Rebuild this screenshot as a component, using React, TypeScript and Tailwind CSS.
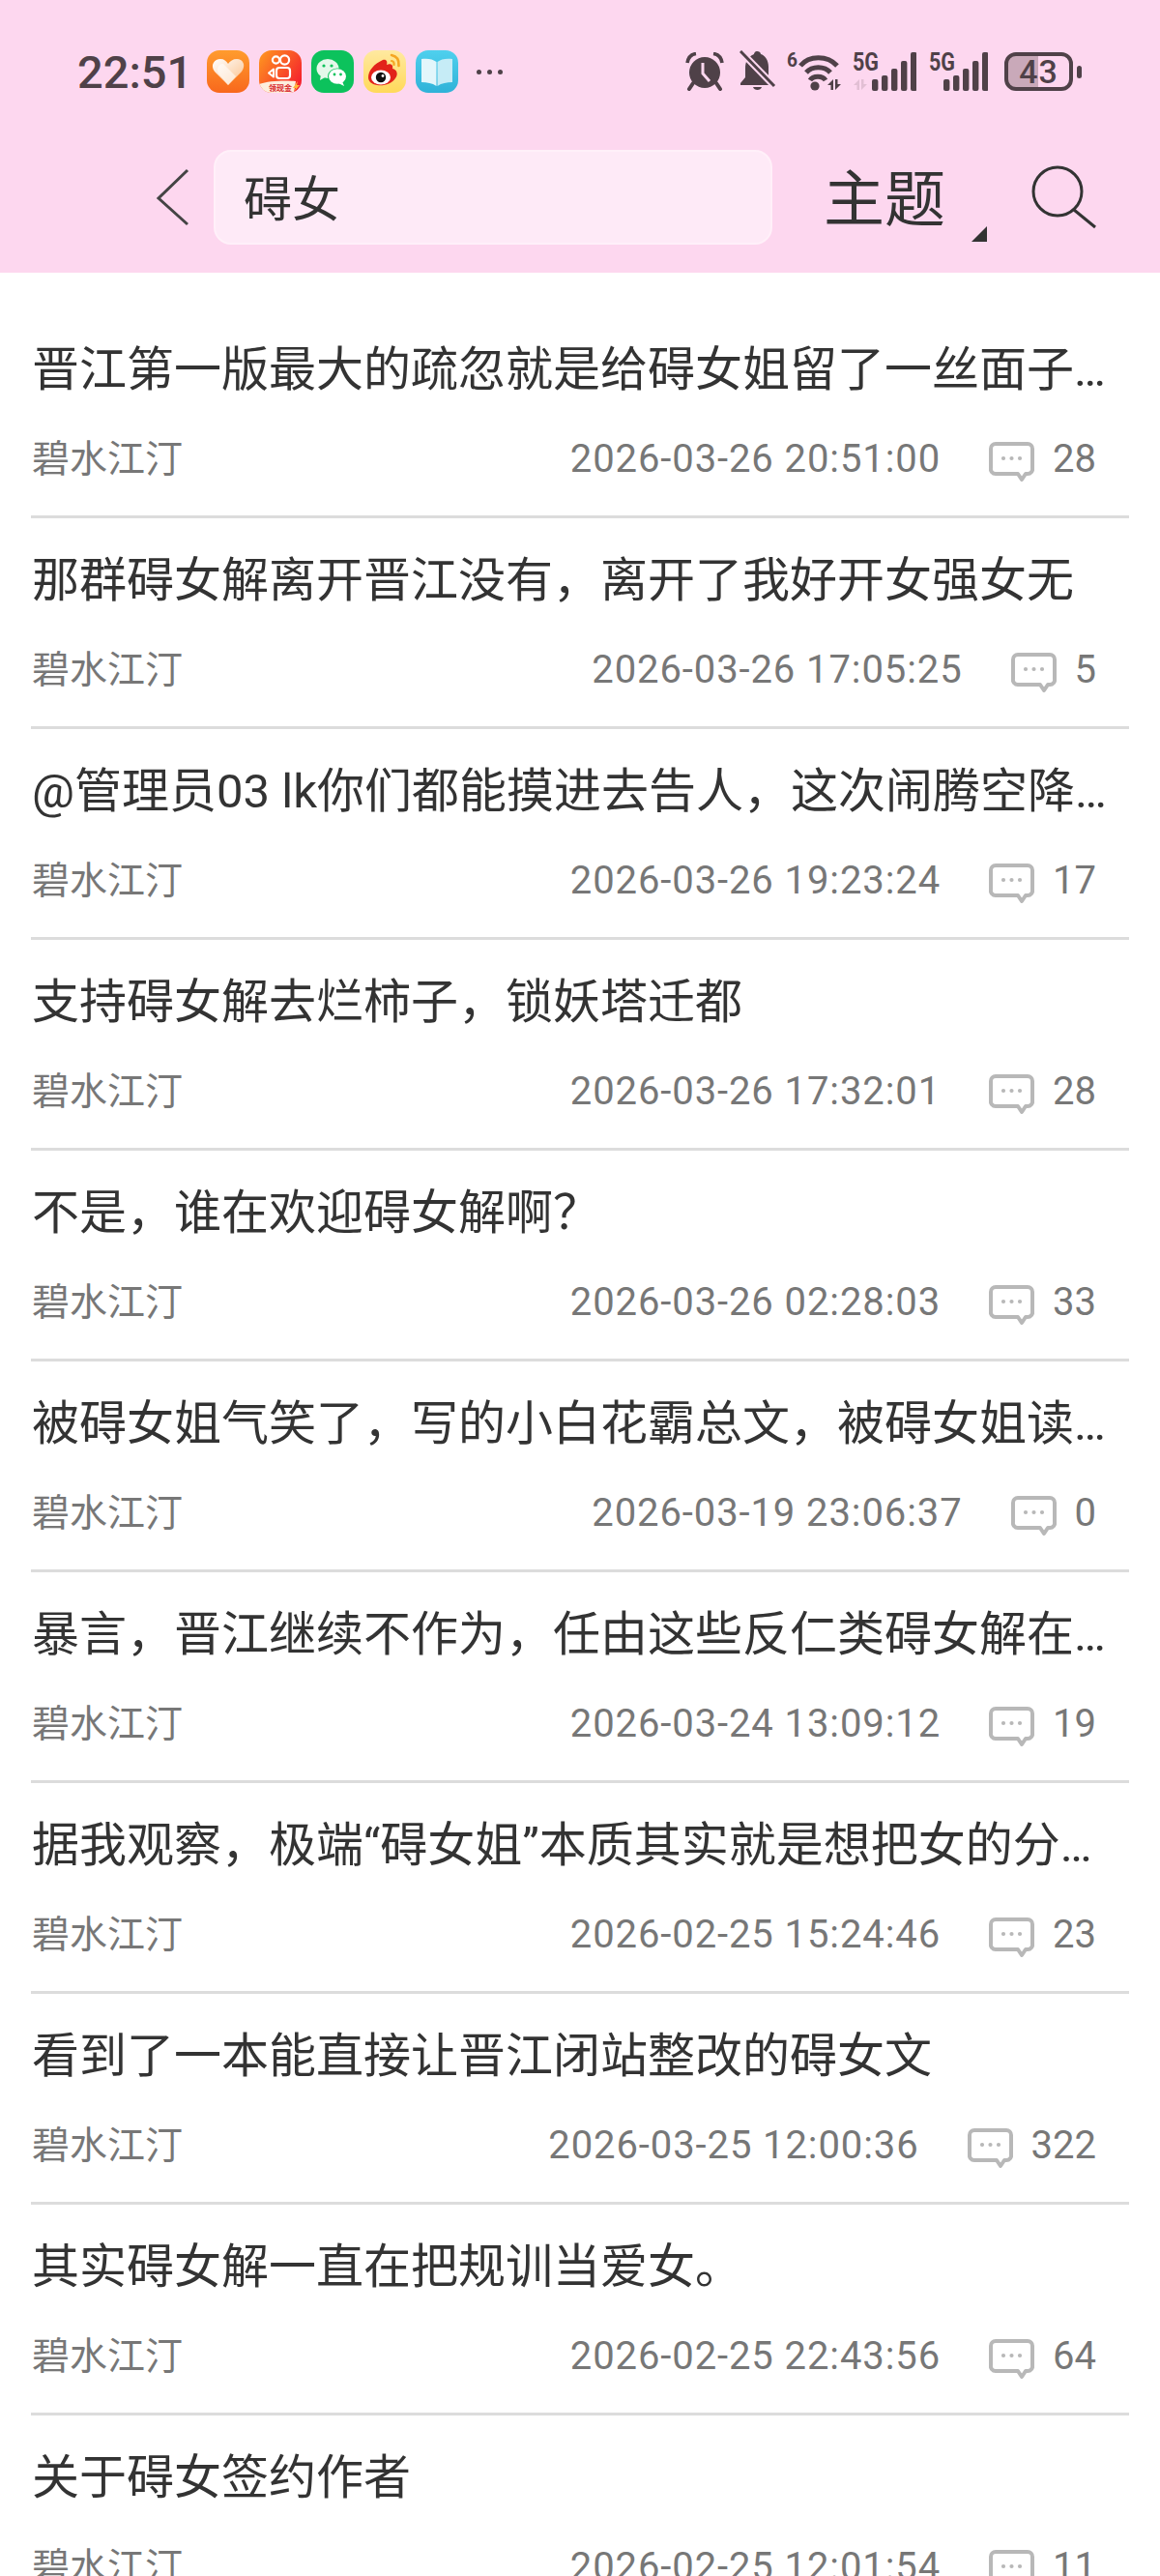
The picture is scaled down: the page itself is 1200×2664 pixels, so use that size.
const topics = [
  { title: "晋江第一版最大的疏忽就是给碍女姐留了一丝面子…", date: "2026-03-26 20:51:00", count: 28 },
  { title: "那群碍女解离开晋江没有，离开了我好开女强女无", date: "2026-03-26 17:05:25", count: 5 },
  { title: "@管理员03 lk你们都能摸进去告人，这次闹腾空降…", date: "2026-03-26 19:23:24", count: 17 },
  { title: "支持碍女解去烂柿子，锁妖塔迁都", date: "2026-03-26 17:32:01", count: 28 },
  { title: "不是，谁在欢迎碍女解啊？", date: "2026-03-26 02:28:03", count: 33 },
  { title: "被碍女姐气笑了，写的小白花霸总文，被碍女姐读…", date: "2026-03-19 23:06:37", count: 0 },
  { title: "暴言，晋江继续不作为，任由这些反仁类碍女解在…", date: "2026-03-24 13:09:12", count: 19 },
  { title: "据我观察，极端“碍女姐”本质其实就是想把女的分…", date: "2026-02-25 15:24:46", count: 23 },
  { title: "看到了一本能直接让晋江闭站整改的碍女文", date: "2026-03-25 12:00:36", count: 322 },
  { title: "其实碍女解一直在把规训当爱女。", date: "2026-02-25 22:43:56", count: 64 },
  { title: "关于碍女签约作者", date: "2026-02-25 12:01:54", count: 11 },
];

const ink = "#4f4148";

function HeartApp() {
  return (
    <svg width="44" height="44" viewBox="0 0 44 44">
      <defs>
        <linearGradient id="heartBg" x1="0" y1="0" x2="0" y2="1">
          <stop offset="0" stopColor="#ff9c2e" />
          <stop offset="1" stopColor="#f8681c" />
        </linearGradient>
        <linearGradient id="heartFg" x1="0" y1="0" x2="1" y2="1">
          <stop offset="0" stopColor="#ffffff" />
          <stop offset="1" stopColor="#fbc08a" />
        </linearGradient>
      </defs>
      <rect width="44" height="44" rx="13" fill="url(#heartBg)" />
      <path d="M22 36 L8 22 C3 15 8 9 14 9 C18 9 20 11 22 14 C24 11 27 9 31 9 C37 9 41 15 36 22 Z" fill="url(#heartFg)" />
      <path d="M22 36 L12 24 C9 19 13 13 17 14 L30 27 Z" fill="#fff" opacity="0.55" />
    </svg>
  );
}

function KuaishouApp() {
  return (
    <svg width="44" height="44" viewBox="0 0 44 44">
      <defs>
        <linearGradient id="ksBg" x1="0" y1="0" x2="1" y2="0.7">
          <stop offset="0" stopColor="#ff9a1f" />
          <stop offset="1" stopColor="#f5222d" />
        </linearGradient>
        <clipPath id="ksClip">
          <rect width="44" height="44" rx="13" />
        </clipPath>
      </defs>
      <g clipPath="url(#ksClip)">
        <rect width="44" height="44" fill="url(#ksBg)" />
        <g fill="none" stroke="#fff" strokeWidth="2.2">
          <circle cx="17.5" cy="10" r="3.6" />
          <circle cx="26.5" cy="10" r="4.6" />
          <rect x="18" y="18" width="14" height="11" rx="3" />
        </g>
        <path d="M15 19.5 L15 27.5 L10 23.5 Z" fill="none" stroke="#fff" strokeWidth="2" strokeLinejoin="round" />
        <path d="M0 35 C10 31 30 31 38 32 L36 44 L0 44 Z" fill="#fdeedd" />
        <text x="10" y="41.5" fontSize="8" fontWeight="700" fill="#d8262c" fontFamily="'Noto Sans CJK SC',sans-serif" textLength="24" lengthAdjust="spacingAndGlyphs">
          领现金
        </text>
        <path d="M40 32 L35 39 L38 39 L36 43 L42 36 L39 36 Z" fill="#ffb63a" />
      </g>
    </svg>
  );
}

function WechatApp() {
  return (
    <svg width="44" height="44" viewBox="0 0 44 44">
      <rect width="44" height="44" rx="13" fill="#0cc25c" />
      <ellipse cx="17" cy="19" rx="11.5" ry="10" fill="#e4f8ea" />
      <path d="M10 25 L9 31 L16 27 Z" fill="#e4f8ea" />
      <ellipse cx="27" cy="27" rx="10" ry="8.6" fill="#0cc25c" />
      <ellipse cx="27" cy="27" rx="9" ry="7.8" fill="#fff" />
      <path d="M32 32 L34 37 L28 34 Z" fill="#fff" />
      <circle cx="13" cy="16" r="1.6" fill="#0cc25c" />
      <circle cx="21" cy="16" r="1.6" fill="#0cc25c" />
      <circle cx="24" cy="25" r="1.4" fill="#0cc25c" />
      <circle cx="30.5" cy="25" r="1.4" fill="#0cc25c" />
    </svg>
  );
}

function WeiboApp() {
  return (
    <svg width="44" height="44" viewBox="0 0 44 44">
      <defs>
        <linearGradient id="wbBg" x1="0" y1="0" x2="0" y2="1">
          <stop offset="0" stopColor="#ffe9a0" />
          <stop offset="1" stopColor="#ffd95a" />
        </linearGradient>
      </defs>
      <rect width="44" height="44" rx="13" fill="url(#wbBg)" />
      <path d="M5 28 C5 21 11 14 20 10 C24 9 25 12 24 15 C29 13 31 16 30 19 C35 20 36 25 33 29 C29 35 21 37 14 36 C8 35 5 32 5 28 Z" fill="#e2231a" />
      <ellipse cx="18" cy="28" rx="10" ry="7.5" fill="#fff" />
      <circle cx="18" cy="28" r="5.2" fill="#111" />
      <circle cx="20" cy="26.5" r="1.4" fill="#fff" />
      <path d="M29 5 C34 6 37 10 36.5 16" fill="none" stroke="#f5a623" strokeWidth="2.6" strokeLinecap="round" />
      <path d="M29 11 C31 11 32 13 31.5 15" fill="none" stroke="#f5a623" strokeWidth="2.2" strokeLinecap="round" />
    </svg>
  );
}

function BookApp() {
  return (
    <svg width="44" height="44" viewBox="0 0 44 44">
      <defs>
        <linearGradient id="bkBg" x1="0" y1="0" x2="0" y2="1">
          <stop offset="0" stopColor="#4fd0ee" />
          <stop offset="1" stopColor="#2fb2d8" />
        </linearGradient>
      </defs>
      <rect width="44" height="44" rx="13" fill="url(#bkBg)" />
      <path d="M6 9 C12 8 18 9 21.5 12 L21.5 37 C17 34 12 33 6 33 Z" fill="#e3f6fb" />
      <path d="M38 9 C32 8 26 9 22.5 12 L22.5 37 C27 34 32 33 38 33 Z" fill="#c6ecf6" />
    </svg>
  );
}

function AlarmIcon() {
  return (
    <svg width="40" height="40" viewBox="0 0 40 40" fill={ink}>
      <circle cx="20" cy="21" r="16" />
      <path d="M2 11 C3 5 7 2 11 1.5" fill="none" stroke={ink} strokeWidth="3.6" />
      <path d="M38 11 C37 5 33 2 29 1.5" fill="none" stroke={ink} strokeWidth="3.6" />
      <path d="M8 32 L4 38 M32 32 L36 38" stroke={ink} strokeWidth="4" strokeLinecap="round" />
      <path d="M18 11 V22 L25 30" fill="none" stroke="#fdd7ef" strokeWidth="3" />
    </svg>
  );
}

function BellIcon() {
  return (
    <svg width="38" height="44" viewBox="0 0 38 44" fill={ink}>
      <path d="M18 1 C16 1 15 3 15 4 C8 7 6 12 6 19 V28 L1 34 V36 H33 V33 L30 28 V17 C30 10 26 5 22 4 C22 2 20 1 18 1 Z" />
      <path d="M14 38 H23 C22 42 15 42 14 38 Z" />
      <path d="M1 1 L36 37" stroke="#fdd7ef" strokeWidth="7" />
      <path d="M1 1 L36 37" stroke={ink} strokeWidth="3" />
    </svg>
  );
}

function Arrows({ color }: { color: string }) {
  return (
    <g fill={color}>
      <path d="M0 6 L6 0 V11 H3.5 V6 Z" />
      <path d="M8 0 H10.5 V5 H14 L8 11 Z" />
    </g>
  );
}

function WifiIcon() {
  return (
    <svg width="57" height="53" viewBox="0 -6 57 53" fill="none">
      <text x="0" y="15" fontSize="20" fontWeight="700" fill={ink} fontFamily="Roboto,sans-serif" textLength="11" lengthAdjust="spacingAndGlyphs">
        6
      </text>
      <path d="M14 14 C23 3 42 3 52 14" stroke={ink} strokeWidth="5" />
      <path d="M20 21 C26 14 39 14 45 21" stroke={ink} strokeWidth="5" />
      <path d="M24 29 C27 24 37 24 40 29" stroke={ink} strokeWidth="5" />
      <circle cx="29" cy="35" r="4.6" fill={ink} />
      <g transform="translate(42 28)">
        <Arrows color={ink} />
      </g>
    </svg>
  );
}

function SignalIcon({ strong }: { strong: boolean }) {
  const tops = [28, 24, 17, 9, 0];
  return (
    <svg width={strong ? 66 : 61} height="53" viewBox={strong ? "0 -6 66 53" : "0 -6 61 53"}>
      <text x="0" y="19" fontSize="25" fontWeight="700" fill={ink} fontFamily="Roboto,sans-serif" textLength="27" lengthAdjust="spacingAndGlyphs">
        5G
      </text>
      {strong && (
        <g transform="translate(1 28)">
          <Arrows color="#e2bfd4" />
        </g>
      )}
      {tops.map((top, i) => (
        <rect key={i} x={(strong ? 20 : 15) + i * 10} y={top} width="6.4" height={40 - top} rx="2" fill={ink} />
      ))}
    </svg>
  );
}

function CommentIcon() {
  return (
    <svg width="47" height="42" viewBox="0 0 47 42" fill="none" className="shrink-0 mt-[5px]">
      <path
        d="M7 2 H40 A5 5 0 0 1 45 7 V27 A5 5 0 0 1 40 33 H38 L34 39 L30 33 H7 A5 5 0 0 1 2 27 V7 A5 5 0 0 1 7 2 Z"
        stroke="#b8b8b8"
        strokeWidth="4"
        strokeLinejoin="round"
      />
      <circle cx="15" cy="17" r="2.1" fill="#b8b8b8" />
      <circle cx="23.5" cy="17" r="2.1" fill="#b8b8b8" />
      <circle cx="32" cy="17" r="2.1" fill="#b8b8b8" />
    </svg>
  );
}

export default function App() {
  return (
    <div className="w-[1200px] h-[2664px] bg-white overflow-hidden font-['Roboto','Noto_Sans_CJK_SC',sans-serif]">
      <header className="h-[282px] bg-[#fdd7ef]">
        {/* status bar */}
        <div className="h-[148px] pl-[80px] flex items-center">
          <span className="w-[134px] text-[47px] font-medium text-[#4f4148] leading-none">22:51</span>
          <div className="flex gap-[10px]">
            <HeartApp />
            <KuaishouApp />
            <WechatApp />
            <WeiboApp />
            <BookApp />
          </div>
          <div className="flex gap-[6px] ml-[19px]">
            <span className="w-[5px] h-[5px] rounded-full bg-[#4f4148]" />
            <span className="w-[5px] h-[5px] rounded-full bg-[#4f4148]" />
            <span className="w-[5px] h-[5px] rounded-full bg-[#4f4148]" />
          </div>
          <div className="ml-[189px] flex items-center">
            <AlarmIcon />
            <div className="ml-[16px]">
              <BellIcon />
            </div>
            <div className="ml-[11px]">
              <WifiIcon />
            </div>
            <div className="ml-[11px]">
              <SignalIcon strong />
            </div>
            <div className="ml-[13px]">
              <SignalIcon strong={false} />
            </div>
            <div className="ml-[17px] w-[71px] h-[40px] rounded-[12px] border-[4px] border-[#4f4148] bg-[linear-gradient(90deg,#c9a9b9_50%,transparent_50%)] flex items-center justify-center text-[34px] font-medium text-[#4f4148] leading-none tracking-[1px]">
              43
            </div>
            <span className="ml-[4px] w-[5px] h-[13px] rounded-[3px] bg-[#4f4148]" />
          </div>
        </div>

        {/* search bar */}
        <div className="flex items-center mt-[7px]">
          <svg width="35" height="60" viewBox="0 0 35 60" fill="none" className="ml-[161px]">
            <path d="M33 2 L3 31 L33 58" stroke="#444" strokeWidth="3" />
          </svg>
          <div className="ml-[25px] w-[578px] h-[98px] rounded-[18px] bg-[#feeaf7] border-[2px] border-[#fff0f9] pl-[29px] pt-[6px] flex items-center text-[50px] text-[#333]">
            碍女
          </div>
          <div className="relative ml-[53px] w-[168px] pt-[4px] text-[63px] leading-none text-[#333]">
            主题
            <span className="absolute left-[153px] top-[63px] w-0 h-0 border-l-[16px] border-l-transparent border-b-[16px] border-b-[#333]" />
          </div>
          <svg width="68" height="66" viewBox="0 0 68 66" fill="none" className="ml-[47px]">
            <circle cx="27" cy="27" r="25" stroke="#333" strokeWidth="3" />
            <path d="M44 46 L66 64" stroke="#333" strokeWidth="3" />
          </svg>
        </div>
      </header>

      {/* topic list */}
      <main className="pt-[36px] px-[32px]">
        {topics.map((topic) => (
          <div key={topic.date} className="h-[218px] box-border border-b-[3px] border-[#dcdcdc] pt-[30px] pl-[1px]">
            <div className="h-[70px] leading-[70px] text-[49px] text-[#333] whitespace-nowrap">{topic.title}</div>
            <div className="h-[50px] mt-[32px] flex items-center justify-between pr-[34px]">
              <span className="text-[39px] text-[#777]">碧水江汀</span>
              <div className="flex items-center text-[40px] text-[#777]">
                <span className="tracking-[0.9px]">{topic.date}</span>
                <div className="ml-[50px] mr-[19px]">
                  <CommentIcon />
                </div>
                <span>{topic.count}</span>
              </div>
            </div>
          </div>
        ))}
      </main>
    </div>
  );
}
